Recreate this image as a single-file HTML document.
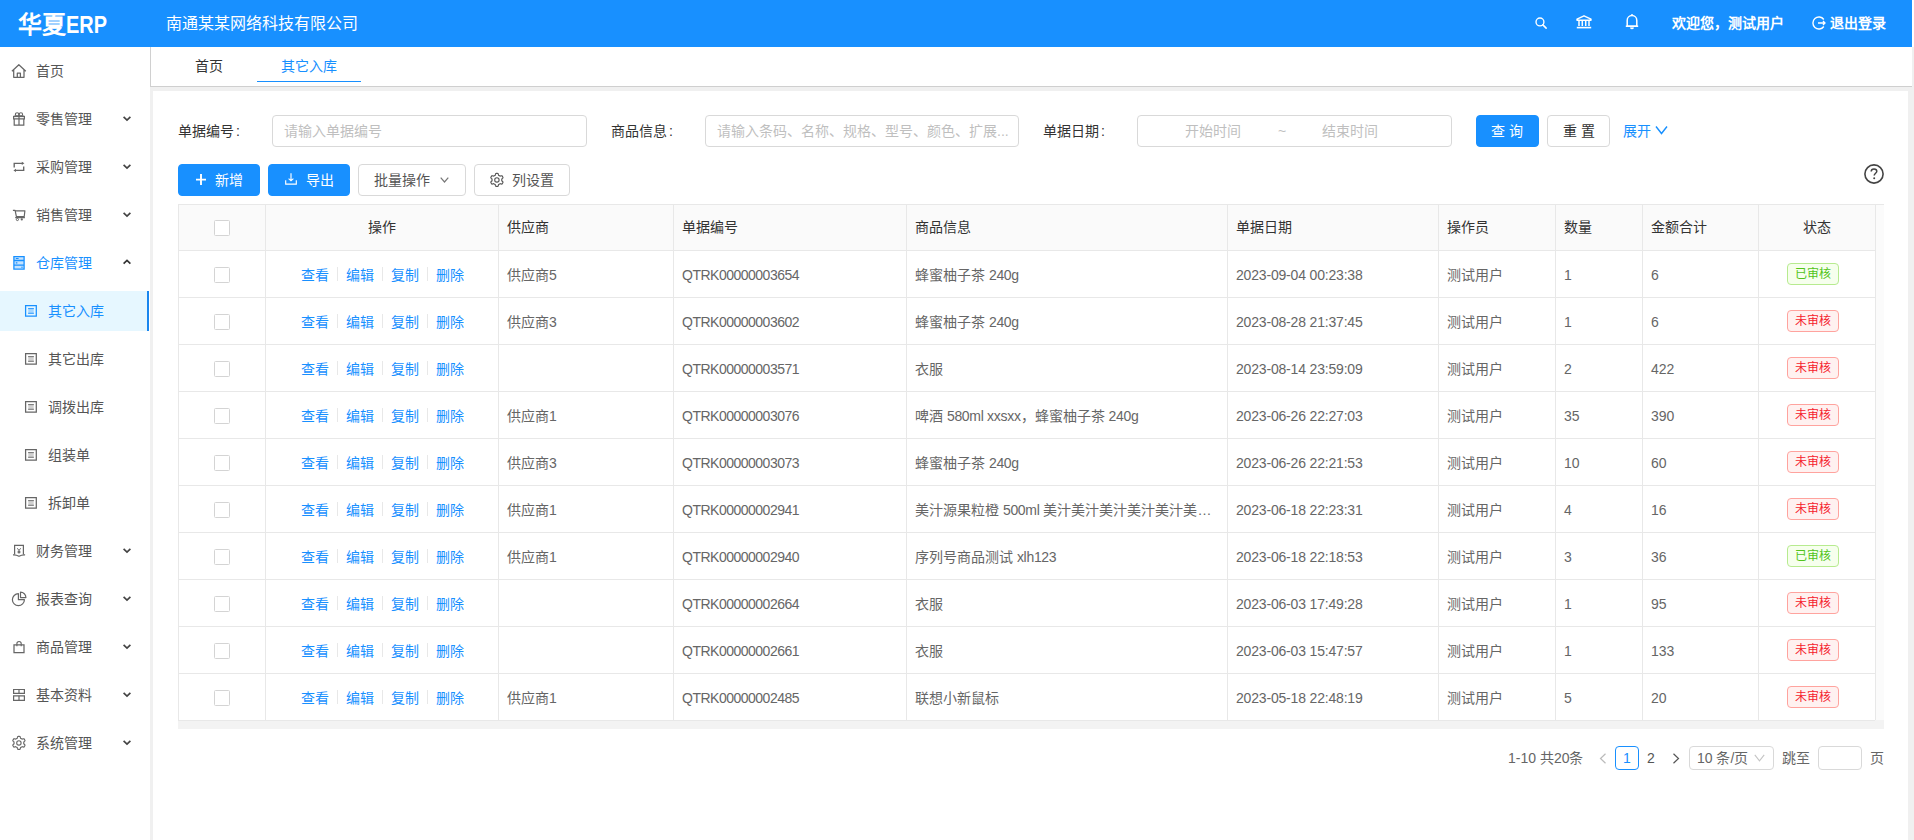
<!DOCTYPE html><html lang="zh-CN"><head><meta charset="utf-8"><style>
*{box-sizing:border-box;margin:0;padding:0}
html,body{width:1914px;height:840px;overflow:hidden;background:#f0f0f0}
body{font-family:"Liberation Sans",sans-serif;font-size:14px;color:#333;position:relative}
.a{position:absolute;white-space:nowrap}
svg{position:absolute;overflow:visible}
#hdr{position:absolute;left:0;top:0;width:1912px;height:47px;background:#1890ff;color:#fff}
#side{position:absolute;left:0;top:47px;width:150px;height:793px;background:#fff}
#tabs{position:absolute;left:150px;top:47px;width:1762px;height:40px;background:#fff;border-left:1px solid #d0d0d0;border-bottom:1px solid #cfcfcf}
#card{position:absolute;left:153px;top:91px;width:1755px;height:749px;background:#fff}
.mt{position:absolute;left:36px;margin-top:1px;line-height:20px;color:#555;white-space:nowrap}
.st{position:absolute;left:48px;margin-top:1px;line-height:20px;color:#555;white-space:nowrap}
.inp{position:absolute;height:32px;border:1px solid #d9d9d9;border-radius:4px;background:#fff}
.ph{position:absolute;color:#bfbfbf;line-height:20px;white-space:nowrap}
.lbl{position:absolute;color:#333;line-height:20px;white-space:nowrap}
.btn{position:absolute;height:32px;border-radius:4px;border:1px solid #d9d9d9;background:#fff;color:#555}
.btnp{background:#1890ff;border-color:#1890ff;color:#fff}
.bt{position:absolute;line-height:20px;white-space:nowrap}
.tb{position:absolute;left:178px;top:204px;width:1706px;height:525px;background:#fafafa}
.hd{position:absolute;top:0;height:46px;background:#fafafa}
.cell{position:absolute;line-height:20px;white-space:nowrap;color:#666}
.hc{position:absolute;line-height:20px;white-space:nowrap;color:#333}
.vl{position:absolute;width:1px;background:#e8e8e8}
.hl{position:absolute;height:1px;background:#e8e8e8}
.cb{position:absolute;width:16px;height:16px;border:1px solid #d4d4d4;border-radius:1.5px;background:#fff}
.lk{position:absolute;line-height:20px;white-space:nowrap;color:#1890ff}
.sep{position:absolute;width:1px;height:14px;background:#e8e8e8}
.tag{position:absolute;height:22px;width:52px;border-radius:4px;font-size:12px;line-height:21px;text-align:center;border:1px solid}
.tg{color:#52c41a;background:#f6ffed;border-color:#b7eb8f}
.tr{color:#f5222d;background:#fff1f0;border-color:#ffa39e}
</style></head><body>
<div id="hdr">
<div class="a" style="left:18px;top:8px;font-size:24px;font-weight:bold;line-height:34px">华夏<span style="display:inline-block;transform:scaleX(0.83);transform-origin:0 50%">ERP</span></div>
<div class="a" style="left:166px;top:13px;font-size:16px;line-height:22px">南通某某网络科技有限公司</div>
<svg style="left:1534px;top:17px" width="14" height="12" viewBox="0 0 14 14"><circle cx="5.8" cy="5.8" r="4.6" fill="none" stroke="#fff" stroke-width="1.6"/><path d="M9.2 9.2 L13 13" stroke="#fff" stroke-width="1.8" stroke-linecap="round"/></svg>
<svg style="left:1576px;top:15px" width="16" height="14" viewBox="0 0 16 14"><path d="M8 0.8 L15 4.2 L15 5.2 L1 5.2 L1 4.2 Z" fill="none" stroke="#fff" stroke-width="1.4" stroke-linejoin="round"/><path d="M3 6 V11 M6.3 6 V11 M9.7 6 V11 M13 6 V11" stroke="#fff" stroke-width="1.5"/><path d="M0.8 12.6 H15.2" stroke="#fff" stroke-width="1.6"/></svg>
<svg style="left:1625px;top:14px" width="14" height="16" viewBox="0 0 14 16"><path d="M2.2 12 V6.5 C2.2 3.6 4.3 1.6 7 1.6 C9.7 1.6 11.8 3.6 11.8 6.5 V12 Z M0.8 12.2 H13.2" fill="none" stroke="#fff" stroke-width="1.5" stroke-linejoin="round"/><path d="M7 0 V1.6" stroke="#fff" stroke-width="1.4"/><path d="M5.5 13.5 Q7 15.5 8.5 13.5" fill="none" stroke="#fff" stroke-width="1.4"/></svg>
<div class="a" style="left:1672px;top:13px;font-size:14px;line-height:20px;font-weight:bold">欢迎您，测试用户</div>
<svg style="left:1812px;top:16px" width="14" height="14" viewBox="0 0 14 14"><path d="M11.8 3.5 A6 6 0 1 0 11.8 10.5" fill="none" stroke="#fff" stroke-width="1.4"/><path d="M6 7 H13 M11 5 L13 7 L11 9" fill="none" stroke="#fff" stroke-width="1.3"/></svg>
<div class="a" style="left:1830px;top:13px;font-size:14px;line-height:20px;font-weight:bold">退出登录</div>
</div>
<div class="a" style="left:1912px;top:0;width:2px;height:47px;background:#fff"></div>
<div id="side">
<svg style="left:10px;top:15px" width="18" height="18" viewBox="0 0 18 18"><path d="M1.9 9.2 L8.85 2.7 L15.8 9.2 M3.7 7.6 V15.3 H14 V7.6 M7.3 15.3 V11.2 H10.4 V15.3" fill="none" stroke="#666" stroke-width="1.25" stroke-linejoin="round"/></svg>
<div class="mt" style="top:13px">首页</div>
<svg style="left:10px;top:63px" width="18" height="18" viewBox="0 0 18 18"><path d="M3.6 6.5 H14.4 V8.8 H3.6 Z M4.2 8.8 V15.2 H13.8 V8.8 M9 6.5 V15.2" fill="none" stroke="#666" stroke-width="1.2"/><path d="M3.6 6.3 H14.4" stroke="#666" stroke-width="1.6"/><ellipse cx="7.1" cy="4.4" rx="1.7" ry="1.6" fill="none" stroke="#666" stroke-width="1.1"/><ellipse cx="10.9" cy="4.4" rx="1.7" ry="1.6" fill="none" stroke="#666" stroke-width="1.1"/></svg>
<div class="mt" style="top:61px">零售管理</div>
<svg style="left:122px;top:68px" width="10" height="8" viewBox="0 0 10 8"><path d="M1.6 1.8 L5 5 L8.4 1.8" fill="none" stroke="#444" stroke-width="1.7"/></svg>
<svg style="left:10px;top:111px" width="18" height="18" viewBox="0 0 18 18"><path d="M4.2 9.4 V5.3 H12.2 M13.7 8.4 V12.4 H5.5" fill="none" stroke="#666" stroke-width="1.35"/><path d="M14.4 5.3 L11.8 3.7 V6.9 Z M3.4 12.4 L6 10.8 V14 Z" fill="#666"/></svg>
<div class="mt" style="top:109px">采购管理</div>
<svg style="left:122px;top:116px" width="10" height="8" viewBox="0 0 10 8"><path d="M1.6 1.8 L5 5 L8.4 1.8" fill="none" stroke="#444" stroke-width="1.7"/></svg>
<svg style="left:10px;top:159px" width="18" height="18" viewBox="0 0 18 18"><path d="M2.9 4.4 H5.1 L6.4 10.7 H14.2 L14.9 4.8 H5.3 M5.2 11.6 H14.9" fill="none" stroke="#666" stroke-width="1.2" stroke-linejoin="round"/><circle cx="7.4" cy="13.5" r="1.1" fill="none" stroke="#666" stroke-width="1"/><circle cx="11.8" cy="13.4" r="1.1" fill="#666"/></svg>
<div class="mt" style="top:157px">销售管理</div>
<svg style="left:122px;top:164px" width="10" height="8" viewBox="0 0 10 8"><path d="M1.6 1.8 L5 5 L8.4 1.8" fill="none" stroke="#444" stroke-width="1.7"/></svg>
<svg style="left:10px;top:207px" width="18" height="18" viewBox="0 0 18 18"><rect x="3.9" y="2.6" width="10.2" height="12.5" fill="#1890ff" fill-opacity="0.25"/><path d="M3.9 2.6 H14.1 V15.1 H3.9 Z M3.9 6.5 H14.1 M3.9 11.2 H14.1" fill="none" stroke="#1890ff" stroke-width="1.3"/><path d="M5.8 4.5 H8.6 M5.8 8.9 H7.4" stroke="#1890ff" stroke-width="1.1"/><circle cx="12" cy="13.2" r="0.7" fill="#1890ff"/></svg>
<div class="mt" style="top:205px;color:#1890ff">仓库管理</div>
<svg style="left:122px;top:211px" width="10" height="8" viewBox="0 0 10 8"><path d="M1.6 5.6 L5 2.4 L8.4 5.6" fill="none" stroke="#333" stroke-width="1.7"/></svg>
<div class="a" style="left:0;top:244px;width:147px;height:40px;background:#e6f7ff"></div>
<div class="a" style="left:146.5px;top:244px;width:2.5px;height:40px;background:#1a86ee"></div>
<svg style="left:22px;top:255px" width="18" height="18" viewBox="0 0 18 18"><path d="M3.6 3.6 H14.3 V14 H3.6 Z" fill="none" stroke="#1890ff" stroke-width="1.25"/><rect x="6.3" y="6.5" width="5.4" height="4.8" fill="#1890ff" fill-opacity="0.3"/><path d="M6.1 6.6 H11.9 M6.1 11.3 H11.9" stroke="#1890ff" stroke-width="0.9"/></svg>
<div class="st" style="top:253px;color:#1890ff">其它入库</div>
<svg style="left:22px;top:303px" width="18" height="18" viewBox="0 0 18 18"><path d="M3.6 3.6 H14.3 V14 H3.6 Z" fill="none" stroke="#666" stroke-width="1.25"/><rect x="6.3" y="6.5" width="5.4" height="4.8" fill="#666" fill-opacity="0.3"/><path d="M6.1 6.6 H11.9 M6.1 11.3 H11.9" stroke="#666" stroke-width="0.9"/></svg>
<div class="st" style="top:301px;">其它出库</div>
<svg style="left:22px;top:351px" width="18" height="18" viewBox="0 0 18 18"><path d="M3.6 3.6 H14.3 V14 H3.6 Z" fill="none" stroke="#666" stroke-width="1.25"/><rect x="6.3" y="6.5" width="5.4" height="4.8" fill="#666" fill-opacity="0.3"/><path d="M6.1 6.6 H11.9 M6.1 11.3 H11.9" stroke="#666" stroke-width="0.9"/></svg>
<div class="st" style="top:349px;">调拨出库</div>
<svg style="left:22px;top:399px" width="18" height="18" viewBox="0 0 18 18"><path d="M3.6 3.6 H14.3 V14 H3.6 Z" fill="none" stroke="#666" stroke-width="1.25"/><rect x="6.3" y="6.5" width="5.4" height="4.8" fill="#666" fill-opacity="0.3"/><path d="M6.1 6.6 H11.9 M6.1 11.3 H11.9" stroke="#666" stroke-width="0.9"/></svg>
<div class="st" style="top:397px;">组装单</div>
<svg style="left:22px;top:447px" width="18" height="18" viewBox="0 0 18 18"><path d="M3.6 3.6 H14.3 V14 H3.6 Z" fill="none" stroke="#666" stroke-width="1.25"/><rect x="6.3" y="6.5" width="5.4" height="4.8" fill="#666" fill-opacity="0.3"/><path d="M6.1 6.6 H11.9 M6.1 11.3 H11.9" stroke="#666" stroke-width="0.9"/></svg>
<div class="st" style="top:445px;">拆卸单</div>
<svg style="left:10px;top:495px" width="18" height="18" viewBox="0 0 18 18"><path d="M4.6 12.6 V3.4 H13.4 V12.6" fill="none" stroke="#666" stroke-width="1.2"/><path d="M3 12.9 Q6 12.6 9 14.3 Q12 12.6 15.1 12.9" fill="none" stroke="#666" stroke-width="1.2"/><path d="M7.3 6.2 L9 8.5 L10.7 6.2 M9 8.5 V11.6 M7.6 9.4 H10.4 M7.6 10.6 H10.4" fill="none" stroke="#666" stroke-width="0.95"/></svg>
<div class="mt" style="top:493px">财务管理</div>
<svg style="left:122px;top:500px" width="10" height="8" viewBox="0 0 10 8"><path d="M1.6 1.8 L5 5 L8.4 1.8" fill="none" stroke="#444" stroke-width="1.7"/></svg>
<svg style="left:10px;top:543px" width="18" height="18" viewBox="0 0 18 18"><path d="M8.4 3.7 A6 6 0 1 0 14.4 9.7 H8.4 Z" fill="none" stroke="#666" stroke-width="1.2" stroke-linejoin="round"/><path d="M10.5 2.2 A5.4 5.4 0 0 1 15.9 7.6 H10.5 Z" fill="none" stroke="#666" stroke-width="1.2" stroke-linejoin="round"/></svg>
<div class="mt" style="top:541px">报表查询</div>
<svg style="left:122px;top:548px" width="10" height="8" viewBox="0 0 10 8"><path d="M1.6 1.8 L5 5 L8.4 1.8" fill="none" stroke="#444" stroke-width="1.7"/></svg>
<svg style="left:10px;top:591px" width="18" height="18" viewBox="0 0 18 18"><path d="M4 6.8 H14 V14.5 H4 Z" fill="none" stroke="#666" stroke-width="1.25"/><path d="M6.9 8.3 V5.6 A2.15 2.15 0 0 1 11.2 5.6 V8.3" fill="none" stroke="#666" stroke-width="1.15"/></svg>
<div class="mt" style="top:589px">商品管理</div>
<svg style="left:122px;top:596px" width="10" height="8" viewBox="0 0 10 8"><path d="M1.6 1.8 L5 5 L8.4 1.8" fill="none" stroke="#444" stroke-width="1.7"/></svg>
<svg style="left:10px;top:639px" width="18" height="18" viewBox="0 0 18 18"><path d="M3.6 3.5 H14.4 V7.3 H3.6 Z M3.6 9.8 H14.4 V14.4 H3.6 Z" fill="none" stroke="#666" stroke-width="1.2"/><rect x="8" y="3.5" width="2" height="3.8" fill="#666" fill-opacity="0.6"/><rect x="8" y="9.8" width="2" height="4.6" fill="#666" fill-opacity="0.6"/></svg>
<div class="mt" style="top:637px">基本资料</div>
<svg style="left:122px;top:644px" width="10" height="8" viewBox="0 0 10 8"><path d="M1.6 1.8 L5 5 L8.4 1.8" fill="none" stroke="#444" stroke-width="1.7"/></svg>
<svg style="left:10px;top:687px" width="18" height="18" viewBox="0 0 18 18"><path d="M8.90 2.40 L9.18 2.41 L9.47 2.42 L9.75 2.46 L10.03 2.50 L10.23 2.89 L10.38 3.39 L10.48 3.90 L10.58 4.30 L10.78 4.37 L10.97 4.46 L11.16 4.55 L11.35 4.66 L11.53 4.77 L11.71 4.89 L11.88 5.01 L12.05 5.15 L12.44 5.03 L12.93 4.87 L13.44 4.74 L13.88 4.72 L14.06 4.94 L14.22 5.17 L14.38 5.41 L14.53 5.65 L14.67 5.90 L14.79 6.15 L14.91 6.41 L15.01 6.68 L14.77 7.05 L14.41 7.42 L14.02 7.76 L13.73 8.05 L13.76 8.26 L13.78 8.47 L13.80 8.69 L13.80 8.90 L13.80 9.11 L13.78 9.33 L13.76 9.54 L13.73 9.75 L14.02 10.04 L14.41 10.38 L14.77 10.75 L15.01 11.12 L14.91 11.39 L14.79 11.65 L14.67 11.90 L14.53 12.15 L14.38 12.39 L14.22 12.63 L14.06 12.86 L13.88 13.08 L13.44 13.06 L12.93 12.93 L12.44 12.77 L12.05 12.65 L11.88 12.79 L11.71 12.91 L11.53 13.03 L11.35 13.14 L11.16 13.25 L10.97 13.34 L10.78 13.43 L10.58 13.50 L10.48 13.90 L10.38 14.41 L10.23 14.91 L10.03 15.30 L9.75 15.34 L9.47 15.38 L9.18 15.39 L8.90 15.40 L8.62 15.39 L8.33 15.38 L8.05 15.34 L7.77 15.30 L7.57 14.91 L7.42 14.41 L7.32 13.90 L7.22 13.50 L7.02 13.43 L6.83 13.34 L6.64 13.25 L6.45 13.14 L6.27 13.03 L6.09 12.91 L5.92 12.79 L5.75 12.65 L5.36 12.77 L4.87 12.93 L4.36 13.06 L3.92 13.08 L3.74 12.86 L3.58 12.63 L3.42 12.39 L3.27 12.15 L3.13 11.90 L3.01 11.65 L2.89 11.39 L2.79 11.12 L3.03 10.75 L3.39 10.38 L3.78 10.04 L4.07 9.75 L4.04 9.54 L4.02 9.33 L4.00 9.11 L4.00 8.90 L4.00 8.69 L4.02 8.47 L4.04 8.26 L4.07 8.05 L3.78 7.76 L3.39 7.42 L3.03 7.05 L2.79 6.68 L2.89 6.41 L3.01 6.15 L3.13 5.90 L3.27 5.65 L3.42 5.41 L3.58 5.17 L3.74 4.94 L3.92 4.72 L4.36 4.74 L4.87 4.87 L5.36 5.03 L5.75 5.15 L5.92 5.01 L6.09 4.89 L6.27 4.77 L6.45 4.66 L6.64 4.55 L6.83 4.46 L7.02 4.37 L7.22 4.30 L7.32 3.90 L7.42 3.39 L7.57 2.89 L7.77 2.50 L8.05 2.46 L8.33 2.42 L8.62 2.41 Z" fill="none" stroke="#666" stroke-width="1.15" stroke-linejoin="round"/><circle cx="8.9" cy="8.9" r="2.2" fill="none" stroke="#666" stroke-width="1.1"/></svg>
<div class="mt" style="top:685px">系统管理</div>
<svg style="left:122px;top:692px" width="10" height="8" viewBox="0 0 10 8"><path d="M1.6 1.8 L5 5 L8.4 1.8" fill="none" stroke="#444" stroke-width="1.7"/></svg>
</div>
<div id="tabs">
<div class="a" style="left:44px;top:9px;line-height:20px;color:#333">首页</div>
<div class="a" style="left:130px;top:9px;line-height:20px;color:#1890ff">其它入库</div>
<div class="a" style="left:106px;top:33.5px;width:104px;height:1.6px;background:#1890ff"></div>
</div>
<div id="card"></div>
<div class="lbl" style="left:178px;top:121px">单据编号<span style="margin-left:2px">:</span></div>
<div class="inp" style="left:272px;top:115px;width:315px"></div>
<div class="ph" style="left:284px;top:121px">请输入单据编号</div>
<div class="lbl" style="left:611px;top:121px">商品信息<span style="margin-left:2px">:</span></div>
<div class="inp" style="left:705px;top:115px;width:314px"></div>
<div class="ph" style="left:717px;top:121px">请输入条码、名称、规格、型号、颜色、扩展...</div>
<div class="lbl" style="left:1043px;top:121px">单据日期<span style="margin-left:2px">:</span></div>
<div class="inp" style="left:1137px;top:115px;width:315px"></div>
<div class="ph" style="left:1185px;top:121px">开始时间</div>
<div class="ph" style="left:1278px;top:121px">~</div>
<div class="ph" style="left:1322px;top:121px">结束时间</div>
<div class="btn btnp" style="left:1476px;top:115px;width:63px"></div>
<div class="bt" style="left:1491px;top:121px;color:#fff;letter-spacing:4px">查询</div>
<div class="btn" style="left:1547px;top:115px;width:63px"></div>
<div class="bt" style="left:1563px;top:121px;color:#333;letter-spacing:4px">重置</div>
<div class="bt" style="left:1623px;top:121px;color:#1890ff">展开</div>
<svg style="left:1655px;top:125px" width="13" height="10" viewBox="0 0 13 10"><path d="M1 1.5 L6.5 8.5 L12 1.5" fill="none" stroke="#1890ff" stroke-width="1.4"/></svg>
<div class="btn btnp" style="left:178px;top:164px;width:82px"></div>
<svg style="left:196px;top:173.5px" width="10" height="11" viewBox="0 0 10 11"><path d="M5 0 V11 M0 5.6 H10" stroke="#fff" stroke-width="1.9"/></svg>
<div class="bt" style="left:215px;top:170px;color:#fff">新增</div>
<div class="btn btnp" style="left:268px;top:164px;width:82px"></div>
<svg style="left:285px;top:173px" width="12" height="12" viewBox="0 0 12 12"><path d="M6 0.3 V7.8 M3.6 5.6 L6 7.8 L8.4 5.6 M0.7 7.2 V11.1 H11.3 V7.2" fill="none" stroke="#fff" stroke-width="1.15"/></svg>
<div class="bt" style="left:306px;top:170px;color:#fff">导出</div>
<div class="btn" style="left:358px;top:164px;width:108px"></div>
<div class="bt" style="left:374px;top:170px;color:#555">批量操作</div>
<svg style="left:440px;top:177px" width="9" height="6" viewBox="0 0 9 6"><path d="M0.7 0.7 L4.5 5 L8.3 0.7" fill="none" stroke="#777" stroke-width="1.2"/></svg>
<div class="btn" style="left:474px;top:164px;width:96px"></div>
<svg style="left:488px;top:171px" width="18" height="18" viewBox="0 0 18 18"><path d="M8.90 2.40 L9.18 2.41 L9.47 2.42 L9.75 2.46 L10.03 2.50 L10.23 2.89 L10.38 3.39 L10.48 3.90 L10.58 4.30 L10.78 4.37 L10.97 4.46 L11.16 4.55 L11.35 4.66 L11.53 4.77 L11.71 4.89 L11.88 5.01 L12.05 5.15 L12.44 5.03 L12.93 4.87 L13.44 4.74 L13.88 4.72 L14.06 4.94 L14.22 5.17 L14.38 5.41 L14.53 5.65 L14.67 5.90 L14.79 6.15 L14.91 6.41 L15.01 6.68 L14.77 7.05 L14.41 7.42 L14.02 7.76 L13.73 8.05 L13.76 8.26 L13.78 8.47 L13.80 8.69 L13.80 8.90 L13.80 9.11 L13.78 9.33 L13.76 9.54 L13.73 9.75 L14.02 10.04 L14.41 10.38 L14.77 10.75 L15.01 11.12 L14.91 11.39 L14.79 11.65 L14.67 11.90 L14.53 12.15 L14.38 12.39 L14.22 12.63 L14.06 12.86 L13.88 13.08 L13.44 13.06 L12.93 12.93 L12.44 12.77 L12.05 12.65 L11.88 12.79 L11.71 12.91 L11.53 13.03 L11.35 13.14 L11.16 13.25 L10.97 13.34 L10.78 13.43 L10.58 13.50 L10.48 13.90 L10.38 14.41 L10.23 14.91 L10.03 15.30 L9.75 15.34 L9.47 15.38 L9.18 15.39 L8.90 15.40 L8.62 15.39 L8.33 15.38 L8.05 15.34 L7.77 15.30 L7.57 14.91 L7.42 14.41 L7.32 13.90 L7.22 13.50 L7.02 13.43 L6.83 13.34 L6.64 13.25 L6.45 13.14 L6.27 13.03 L6.09 12.91 L5.92 12.79 L5.75 12.65 L5.36 12.77 L4.87 12.93 L4.36 13.06 L3.92 13.08 L3.74 12.86 L3.58 12.63 L3.42 12.39 L3.27 12.15 L3.13 11.90 L3.01 11.65 L2.89 11.39 L2.79 11.12 L3.03 10.75 L3.39 10.38 L3.78 10.04 L4.07 9.75 L4.04 9.54 L4.02 9.33 L4.00 9.11 L4.00 8.90 L4.00 8.69 L4.02 8.47 L4.04 8.26 L4.07 8.05 L3.78 7.76 L3.39 7.42 L3.03 7.05 L2.79 6.68 L2.89 6.41 L3.01 6.15 L3.13 5.90 L3.27 5.65 L3.42 5.41 L3.58 5.17 L3.74 4.94 L3.92 4.72 L4.36 4.74 L4.87 4.87 L5.36 5.03 L5.75 5.15 L5.92 5.01 L6.09 4.89 L6.27 4.77 L6.45 4.66 L6.64 4.55 L6.83 4.46 L7.02 4.37 L7.22 4.30 L7.32 3.90 L7.42 3.39 L7.57 2.89 L7.77 2.50 L8.05 2.46 L8.33 2.42 L8.62 2.41 Z" fill="none" stroke="#555" stroke-width="1.15" stroke-linejoin="round"/><circle cx="8.9" cy="8.9" r="2.2" fill="none" stroke="#555" stroke-width="1.1"/></svg>
<div class="bt" style="left:512px;top:170px;color:#555">列设置</div>
<svg style="left:1864px;top:164px" width="20" height="20" viewBox="0 0 20 20"><circle cx="10" cy="10" r="9.1" fill="none" stroke="#444" stroke-width="1.6"/><path d="M7.2 7.6 C7.2 5.8 8.5 4.9 10 4.9 C11.6 4.9 12.8 5.9 12.8 7.3 C12.8 9.2 10.2 9.4 10.2 11.6" fill="none" stroke="#444" stroke-width="1.5"/><circle cx="10.2" cy="14.3" r="1" fill="#444"/></svg>
<div class="a" style="left:178px;top:204px;width:1706px;height:525px;background:#fbfbfb"></div>
<div class="a" style="left:178px;top:720px;width:1706px;height:9px;background:#f3f3f3"></div>
<div class="a" style="left:178px;top:204px;width:1697px;height:46px;background:#fafafa"></div>
<div class="a" style="left:178px;top:250px;width:1697px;height:470px;background:#fff"></div>
<div class="hl" style="left:178px;top:204px;width:1706px"></div>
<div class="hl" style="left:178px;top:250px;width:1697px"></div>
<div class="hl" style="left:178px;top:297px;width:1697px"></div>
<div class="hl" style="left:178px;top:344px;width:1697px"></div>
<div class="hl" style="left:178px;top:391px;width:1697px"></div>
<div class="hl" style="left:178px;top:438px;width:1697px"></div>
<div class="hl" style="left:178px;top:485px;width:1697px"></div>
<div class="hl" style="left:178px;top:532px;width:1697px"></div>
<div class="hl" style="left:178px;top:579px;width:1697px"></div>
<div class="hl" style="left:178px;top:626px;width:1697px"></div>
<div class="hl" style="left:178px;top:673px;width:1697px"></div>
<div class="hl" style="left:178px;top:720px;width:1697px"></div>
<div class="vl" style="left:178px;top:204px;height:516px"></div>
<div class="vl" style="left:265px;top:204px;height:516px"></div>
<div class="vl" style="left:498px;top:204px;height:516px"></div>
<div class="vl" style="left:673px;top:204px;height:516px"></div>
<div class="vl" style="left:906px;top:204px;height:516px"></div>
<div class="vl" style="left:1227px;top:204px;height:516px"></div>
<div class="vl" style="left:1438px;top:204px;height:516px"></div>
<div class="vl" style="left:1555px;top:204px;height:516px"></div>
<div class="vl" style="left:1642px;top:204px;height:516px"></div>
<div class="vl" style="left:1758px;top:204px;height:516px"></div>
<div class="vl" style="left:1875px;top:204px;height:516px"></div>
<div class="cb" style="left:214px;top:220px"></div>
<div class="hc" style="left:265.5px;width:232.5px;text-align:center;top:217px">操作</div>
<div class="hc" style="left:507px;top:217px">供应商</div>
<div class="hc" style="left:682px;top:217px">单据编号</div>
<div class="hc" style="left:915px;top:217px">商品信息</div>
<div class="hc" style="left:1236px;top:217px">单据日期</div>
<div class="hc" style="left:1447px;top:217px">操作员</div>
<div class="hc" style="left:1564px;top:217px">数量</div>
<div class="hc" style="left:1651px;top:217px">金额合计</div>
<div class="hc" style="left:1758px;width:117px;text-align:center;top:217px">状态</div>
<div class="cb" style="left:214px;top:267px"></div>
<div class="lk" style="left:301px;top:265px">查看</div>
<div class="sep" style="left:337px;top:267px"></div>
<div class="lk" style="left:346px;top:265px">编辑</div>
<div class="sep" style="left:382px;top:267px"></div>
<div class="lk" style="left:391px;top:265px">复制</div>
<div class="sep" style="left:427px;top:267px"></div>
<div class="lk" style="left:436px;top:265px">删除</div>
<div class="cell" style="left:507px;top:265px;">供应商5</div>
<div class="cell" style="left:682px;top:265px;letter-spacing:-0.5px;">QTRK00000003654</div>
<div class="cell" style="left:915px;top:265px;">蜂蜜柚子茶 <span style="letter-spacing:-0.3px">240g</span></div>
<div class="cell" style="left:1236px;top:265px;letter-spacing:-0.18px;">2023-09-04 00:23:38</div>
<div class="cell" style="left:1447px;top:265px;">测试用户</div>
<div class="cell" style="left:1564px;top:265px;">1</div>
<div class="cell" style="left:1651px;top:265px;">6</div>
<div class="tag tg" style="left:1787px;top:263px">已审核</div>
<div class="cb" style="left:214px;top:314px"></div>
<div class="lk" style="left:301px;top:312px">查看</div>
<div class="sep" style="left:337px;top:314px"></div>
<div class="lk" style="left:346px;top:312px">编辑</div>
<div class="sep" style="left:382px;top:314px"></div>
<div class="lk" style="left:391px;top:312px">复制</div>
<div class="sep" style="left:427px;top:314px"></div>
<div class="lk" style="left:436px;top:312px">删除</div>
<div class="cell" style="left:507px;top:312px;">供应商3</div>
<div class="cell" style="left:682px;top:312px;letter-spacing:-0.5px;">QTRK00000003602</div>
<div class="cell" style="left:915px;top:312px;">蜂蜜柚子茶 <span style="letter-spacing:-0.3px">240g</span></div>
<div class="cell" style="left:1236px;top:312px;letter-spacing:-0.18px;">2023-08-28 21:37:45</div>
<div class="cell" style="left:1447px;top:312px;">测试用户</div>
<div class="cell" style="left:1564px;top:312px;">1</div>
<div class="cell" style="left:1651px;top:312px;">6</div>
<div class="tag tr" style="left:1787px;top:310px">未审核</div>
<div class="cb" style="left:214px;top:361px"></div>
<div class="lk" style="left:301px;top:359px">查看</div>
<div class="sep" style="left:337px;top:361px"></div>
<div class="lk" style="left:346px;top:359px">编辑</div>
<div class="sep" style="left:382px;top:361px"></div>
<div class="lk" style="left:391px;top:359px">复制</div>
<div class="sep" style="left:427px;top:361px"></div>
<div class="lk" style="left:436px;top:359px">删除</div>
<div class="cell" style="left:682px;top:359px;letter-spacing:-0.5px;">QTRK00000003571</div>
<div class="cell" style="left:915px;top:359px;">衣服</div>
<div class="cell" style="left:1236px;top:359px;letter-spacing:-0.18px;">2023-08-14 23:59:09</div>
<div class="cell" style="left:1447px;top:359px;">测试用户</div>
<div class="cell" style="left:1564px;top:359px;">2</div>
<div class="cell" style="left:1651px;top:359px;">422</div>
<div class="tag tr" style="left:1787px;top:357px">未审核</div>
<div class="cb" style="left:214px;top:408px"></div>
<div class="lk" style="left:301px;top:406px">查看</div>
<div class="sep" style="left:337px;top:408px"></div>
<div class="lk" style="left:346px;top:406px">编辑</div>
<div class="sep" style="left:382px;top:408px"></div>
<div class="lk" style="left:391px;top:406px">复制</div>
<div class="sep" style="left:427px;top:408px"></div>
<div class="lk" style="left:436px;top:406px">删除</div>
<div class="cell" style="left:507px;top:406px;">供应商1</div>
<div class="cell" style="left:682px;top:406px;letter-spacing:-0.5px;">QTRK00000003076</div>
<div class="cell" style="left:915px;top:406px;">啤酒 <span style="letter-spacing:-0.3px">580ml xxsxx</span>，蜂蜜柚子茶 <span style="letter-spacing:-0.3px">240g</span></div>
<div class="cell" style="left:1236px;top:406px;letter-spacing:-0.18px;">2023-06-26 22:27:03</div>
<div class="cell" style="left:1447px;top:406px;">测试用户</div>
<div class="cell" style="left:1564px;top:406px;">35</div>
<div class="cell" style="left:1651px;top:406px;">390</div>
<div class="tag tr" style="left:1787px;top:404px">未审核</div>
<div class="cb" style="left:214px;top:455px"></div>
<div class="lk" style="left:301px;top:453px">查看</div>
<div class="sep" style="left:337px;top:455px"></div>
<div class="lk" style="left:346px;top:453px">编辑</div>
<div class="sep" style="left:382px;top:455px"></div>
<div class="lk" style="left:391px;top:453px">复制</div>
<div class="sep" style="left:427px;top:455px"></div>
<div class="lk" style="left:436px;top:453px">删除</div>
<div class="cell" style="left:507px;top:453px;">供应商3</div>
<div class="cell" style="left:682px;top:453px;letter-spacing:-0.5px;">QTRK00000003073</div>
<div class="cell" style="left:915px;top:453px;">蜂蜜柚子茶 <span style="letter-spacing:-0.3px">240g</span></div>
<div class="cell" style="left:1236px;top:453px;letter-spacing:-0.18px;">2023-06-26 22:21:53</div>
<div class="cell" style="left:1447px;top:453px;">测试用户</div>
<div class="cell" style="left:1564px;top:453px;">10</div>
<div class="cell" style="left:1651px;top:453px;">60</div>
<div class="tag tr" style="left:1787px;top:451px">未审核</div>
<div class="cb" style="left:214px;top:502px"></div>
<div class="lk" style="left:301px;top:500px">查看</div>
<div class="sep" style="left:337px;top:502px"></div>
<div class="lk" style="left:346px;top:500px">编辑</div>
<div class="sep" style="left:382px;top:502px"></div>
<div class="lk" style="left:391px;top:500px">复制</div>
<div class="sep" style="left:427px;top:502px"></div>
<div class="lk" style="left:436px;top:500px">删除</div>
<div class="cell" style="left:507px;top:500px;">供应商1</div>
<div class="cell" style="left:682px;top:500px;letter-spacing:-0.5px;">QTRK00000002941</div>
<div class="cell" style="left:915px;top:500px;">美汁源果粒橙 <span style="letter-spacing:-0.3px">500ml</span> 美汁美汁美汁美汁美汁美…</div>
<div class="cell" style="left:1236px;top:500px;letter-spacing:-0.18px;">2023-06-18 22:23:31</div>
<div class="cell" style="left:1447px;top:500px;">测试用户</div>
<div class="cell" style="left:1564px;top:500px;">4</div>
<div class="cell" style="left:1651px;top:500px;">16</div>
<div class="tag tr" style="left:1787px;top:498px">未审核</div>
<div class="cb" style="left:214px;top:549px"></div>
<div class="lk" style="left:301px;top:547px">查看</div>
<div class="sep" style="left:337px;top:549px"></div>
<div class="lk" style="left:346px;top:547px">编辑</div>
<div class="sep" style="left:382px;top:549px"></div>
<div class="lk" style="left:391px;top:547px">复制</div>
<div class="sep" style="left:427px;top:549px"></div>
<div class="lk" style="left:436px;top:547px">删除</div>
<div class="cell" style="left:507px;top:547px;">供应商1</div>
<div class="cell" style="left:682px;top:547px;letter-spacing:-0.5px;">QTRK00000002940</div>
<div class="cell" style="left:915px;top:547px;">序列号商品测试 <span style="letter-spacing:-0.3px">xlh123</span></div>
<div class="cell" style="left:1236px;top:547px;letter-spacing:-0.18px;">2023-06-18 22:18:53</div>
<div class="cell" style="left:1447px;top:547px;">测试用户</div>
<div class="cell" style="left:1564px;top:547px;">3</div>
<div class="cell" style="left:1651px;top:547px;">36</div>
<div class="tag tg" style="left:1787px;top:545px">已审核</div>
<div class="cb" style="left:214px;top:596px"></div>
<div class="lk" style="left:301px;top:594px">查看</div>
<div class="sep" style="left:337px;top:596px"></div>
<div class="lk" style="left:346px;top:594px">编辑</div>
<div class="sep" style="left:382px;top:596px"></div>
<div class="lk" style="left:391px;top:594px">复制</div>
<div class="sep" style="left:427px;top:596px"></div>
<div class="lk" style="left:436px;top:594px">删除</div>
<div class="cell" style="left:682px;top:594px;letter-spacing:-0.5px;">QTRK00000002664</div>
<div class="cell" style="left:915px;top:594px;">衣服</div>
<div class="cell" style="left:1236px;top:594px;letter-spacing:-0.18px;">2023-06-03 17:49:28</div>
<div class="cell" style="left:1447px;top:594px;">测试用户</div>
<div class="cell" style="left:1564px;top:594px;">1</div>
<div class="cell" style="left:1651px;top:594px;">95</div>
<div class="tag tr" style="left:1787px;top:592px">未审核</div>
<div class="cb" style="left:214px;top:643px"></div>
<div class="lk" style="left:301px;top:641px">查看</div>
<div class="sep" style="left:337px;top:643px"></div>
<div class="lk" style="left:346px;top:641px">编辑</div>
<div class="sep" style="left:382px;top:643px"></div>
<div class="lk" style="left:391px;top:641px">复制</div>
<div class="sep" style="left:427px;top:643px"></div>
<div class="lk" style="left:436px;top:641px">删除</div>
<div class="cell" style="left:682px;top:641px;letter-spacing:-0.5px;">QTRK00000002661</div>
<div class="cell" style="left:915px;top:641px;">衣服</div>
<div class="cell" style="left:1236px;top:641px;letter-spacing:-0.18px;">2023-06-03 15:47:57</div>
<div class="cell" style="left:1447px;top:641px;">测试用户</div>
<div class="cell" style="left:1564px;top:641px;">1</div>
<div class="cell" style="left:1651px;top:641px;">133</div>
<div class="tag tr" style="left:1787px;top:639px">未审核</div>
<div class="cb" style="left:214px;top:690px"></div>
<div class="lk" style="left:301px;top:688px">查看</div>
<div class="sep" style="left:337px;top:690px"></div>
<div class="lk" style="left:346px;top:688px">编辑</div>
<div class="sep" style="left:382px;top:690px"></div>
<div class="lk" style="left:391px;top:688px">复制</div>
<div class="sep" style="left:427px;top:690px"></div>
<div class="lk" style="left:436px;top:688px">删除</div>
<div class="cell" style="left:507px;top:688px;">供应商1</div>
<div class="cell" style="left:682px;top:688px;letter-spacing:-0.5px;">QTRK00000002485</div>
<div class="cell" style="left:915px;top:688px;">联想小新鼠标</div>
<div class="cell" style="left:1236px;top:688px;letter-spacing:-0.18px;">2023-05-18 22:48:19</div>
<div class="cell" style="left:1447px;top:688px;">测试用户</div>
<div class="cell" style="left:1564px;top:688px;">5</div>
<div class="cell" style="left:1651px;top:688px;">20</div>
<div class="tag tr" style="left:1787px;top:686px">未审核</div>
<div class="cell" style="left:1508px;top:748px;color:#666">1-10 共20条</div>
<svg style="left:1599px;top:753px" width="8" height="11" viewBox="0 0 8 11"><path d="M6.5 0.8 L1.5 5.5 L6.5 10.2" fill="none" stroke="#bbb" stroke-width="1.2"/></svg>
<div class="a" style="left:1615px;top:746px;width:24px;height:24px;border:1px solid #1890ff;border-radius:4px;color:#1890ff;text-align:center;line-height:22px">1</div>
<div class="a" style="left:1647px;top:746px;width:10px;line-height:24px;color:#555">2</div>
<svg style="left:1672px;top:753px" width="8" height="11" viewBox="0 0 8 11"><path d="M1.5 0.8 L6.5 5.5 L1.5 10.2" fill="none" stroke="#555" stroke-width="1.2"/></svg>
<div class="a" style="left:1689px;top:746px;width:85px;height:24px;border:1px solid #d9d9d9;border-radius:4px"></div>
<div class="cell" style="left:1697px;top:748px;color:#666">10 条/页</div>
<svg style="left:1753.5px;top:754px" width="11" height="8" viewBox="0 0 11 8"><path d="M0.8 0.8 L5.5 6.8 L10.2 0.8" fill="none" stroke="#c4c4c4" stroke-width="1.1"/></svg>
<div class="cell" style="left:1782px;top:748px;color:#666">跳至</div>
<div class="a" style="left:1818px;top:746px;width:44px;height:24px;border:1px solid #d9d9d9;border-radius:4px;background:#fff"></div>
<div class="cell" style="left:1870px;top:748px;color:#666">页</div>
</body></html>
